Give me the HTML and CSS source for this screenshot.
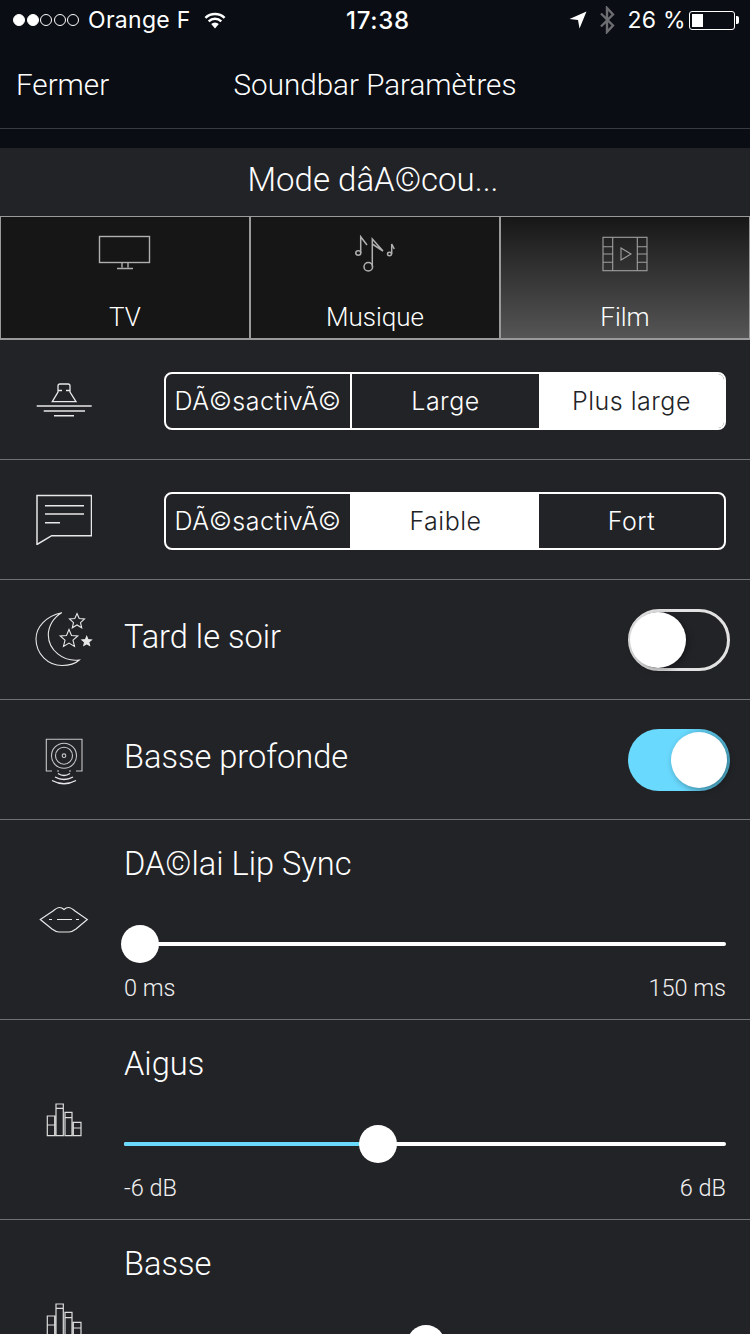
FILE: index.html
```html
<!DOCTYPE html>
<html lang="fr">
<head>
<meta charset="utf-8">
<title>Soundbar Paramètres</title>
<link rel="stylesheet" href="styles.css">
</head>
<body>
<div class="screen">
  <header class="top">
    <div class="status">
      <div class="status-left">
        <span class="signal"><i class="on"></i><i class="on"></i><i></i><i></i><i></i></span>
        <span class="carrier">Orange F</span>
        <svg class="wifi" width="24" height="18" viewBox="0 0 24 18"><path d="M12 17.500 8.200 13a5.500 5.500 0 0 1 7.600 0Z" fill="#fff"/><path d="M5.700 10.300a9.200 9.200 0 0 1 12.600 0M2.400 6.800a14 14 0 0 1 19.200 0" fill="none" stroke="#fff" stroke-width="2.500"/></svg>
      </div>
      <div class="clock">17:38</div>
      <div class="status-right">
        <svg class="arrow" width="18" height="18" viewBox="0 0 18 18"><path d="M0.500 8 17.500 0.500 10.500 17.500 9 9Z" fill="#fff"/></svg>
        <svg class="bt" width="16" height="28" viewBox="0 0 16 28"><path d="M2 7.500 14 19.500 8 26V2L14 8.500 2 20.500" fill="none" stroke="#6b6d70" stroke-width="2.400"/></svg>
        <span class="percent">26 %</span>
        <span class="battery"><span class="battery-level"></span></span><span class="battery-tip"></span>
      </div>
    </div>
    <nav class="nav">
      <span class="nav-close">Fermer</span>
      <span class="nav-title">Soundbar Paramètres</span>
    </nav>
    <div class="nav-gap"></div>
  </header>

  <h1 class="mode-title">Mode dâA©cou...</h1>

  <div class="tabs">
    <div class="tab">
      <svg class="tab-icon" width="54" height="37" viewBox="0 0 54 37" fill="none" stroke="#b0b0b0" stroke-width="1.400"><rect x="1.500" y="1.500" width="50" height="26"/><path d="M24 28v4.500M30 28v4.500M19 33.500h16"/></svg>
      <span class="tab-label">TV</span>
    </div>
    <div class="tab">
      <svg class="tab-icon" width="42" height="37" viewBox="0 0 42 37" fill="none" stroke="#b0b0b0" stroke-width="1.500"><path d="M6.700 18V1.700L13 10"/><ellipse cx="4.300" cy="18" rx="2.500" ry="2.200"/><path d="M18.300 31.700V4L29 16 18.300 9"/><circle cx="14.300" cy="31.700" r="4.300"/><path d="M37.700 19V9l2.600 5"/><ellipse cx="35.500" cy="19" rx="2" ry="1.700"/></svg>
      <span class="tab-label">Musique</span>
    </div>
    <div class="tab tab-active">
      <svg class="tab-icon" width="46" height="37" viewBox="0 0 46 37" fill="none" stroke="#a0a0a0" stroke-width="1.100"><rect x="1" y="2.300" width="44" height="33.400"/><path d="M10.700 2.300v33.400M35.300 2.300v33.400M1 11.700h9.700M1 19h9.700M1 27.300h9.700M35.300 11.700H45M35.300 19H45M35.300 27.300H45M19 13v12l10-6Z"/></svg>
      <span class="tab-label">Film</span>
    </div>
  </div>

  <section class="row">
    <div class="row-icon">
      <svg width="58" height="35" viewBox="0 0 58 35" fill="none" stroke="#e8e8e8" stroke-width="1.300"><path d="M17.300 19.700 23 10V4q0-2 2-2h8q2 0 2 2V10l6 9.700ZM23 8.500h4M31 8.500h4"/><path d="M1.700 24h55M8.700 29H50M19 33.700h20" stroke-width="1.500"/></svg>
    </div>
    <div class="segments">
      <span class="segment segment-first">DÃ©sactivÃ©</span>
      <span class="segment">Large</span>
      <span class="segment segment-on">Plus large</span>
    </div>
  </section>

  <section class="row">
    <div class="row-icon">
      <svg width="56" height="51" viewBox="0 0 56 51" fill="none" stroke="#e8e8e8" stroke-width="1.500"><path d="M1 1.500h54.500v40.200H15.700L1 50.500Z"/><path d="M9 11.700h39M9 20h39M9 28.700h15"/></svg>
    </div>
    <div class="segments">
      <span class="segment segment-first">DÃ©sactivÃ©</span>
      <span class="segment segment-on">Faible</span>
      <span class="segment">Fort</span>
    </div>
  </section>

  <section class="row">
    <div class="row-icon">
      <svg width="58" height="55" viewBox="0 0 58 55" fill="none" stroke="#e8e8e8" stroke-width="1.100"><path d="M26.700 .700C11 4 1 15 1 27 1 42 13 53.500 27 53.500 33 53.500 40 52 44.300 48 28 50 13.500 38 13.300 23 13.300 14 19 5 26.700 .700Z"/><path d="m42 1.500 2.200 5 5.300.5-4 3.600 1.200 5.200-4.700-2.800-4.700 2.800 1.200-5.200-4-3.600 5.300-.5ZM34 17.500l2.500 6 6.300.5-4.800 4.200 1.500 6.200-5.500-3.300-5.500 3.300 1.500-6.200-4.800-4.200 6.300-.5Z"/><path fill="#e8e8e8" d="m51.700 24.500 1.300 3.100 3.400.3-2.600 2.200.8 3.300-2.900-1.700-2.900 1.700.8-3.300-2.600-2.200 3.400-.3Z"/></svg>
    </div>
    <span class="row-label row-label-inline">Tard le soir</span>
    <span class="toggle"><span class="toggle-knob"></span></span>
  </section>

  <section class="row">
    <div class="row-icon">
      <svg width="38" height="51" viewBox="0 0 38 51" fill="none" stroke="#c8c8c8" stroke-width="1.100"><path d="M7 37H1.300V5.300H37V37H31M12 37h2M24 37h2"/><circle cx="19" cy="21.700" r="12.500"/><circle cx="19" cy="21.700" r="8.500"/><circle cx="19" cy="21.700" r="1.800"/><path stroke="#e8e8e8" stroke-width="1.400" d="M13 39.500q6 4 12 0M10 43q9 5 18 0M7 46.500q12 6.500 24 0"/></svg>
    </div>
    <span class="row-label row-label-inline">Basse profonde</span>
    <span class="toggle toggle-on"><span class="toggle-knob"></span></span>
  </section>

  <section class="row row-slider">
    <div class="row-icon">
      <svg width="50" height="27" viewBox="0 0 50 27" fill="none" stroke="#e8e8e8" stroke-width="1.200"><path d="M1.300 13.500 14 5Q18 1.500 20.500 1.500 23 1.500 25 3.500 27 1.500 29.500 1.500 32 1.500 36 5L48.300 13.500 37 23Q33 26 30 26H20Q17 26 13 23Z"/><path d="M10 13.500h3M18 13.500h15M37 13.500h3"/></svg>
    </div>
    <div class="slider-body">
      <span class="row-label">DA©lai Lip Sync</span>
      <div class="slider">
        <span class="track"></span>
        <span class="thumb thumb-start"></span>
      </div>
      <div class="slider-scale"><span>0 ms</span><span>150 ms</span></div>
    </div>
  </section>

  <section class="row row-slider">
    <div class="row-icon">
      <svg width="36" height="35" viewBox="0 0 36 35" fill="none" stroke="#dcdcdc" stroke-width="1.200"><path d="M1.300 14h7.400v19.700H1.300ZM1.300 23h7.400M10 2h7.300v31.700H10ZM10 6.300h7.300M19 10.300h7v23.400h-7ZM19 15.700h7M27.300 20.300H35v13.400h-7.700ZM27.300 26H35"/></svg>
    </div>
    <div class="slider-body">
      <span class="row-label">Aigus</span>
      <div class="slider">
        <span class="track"></span>
        <span class="track-fill"></span>
        <span class="thumb thumb-treble"></span>
      </div>
      <div class="slider-scale"><span>-6 dB</span><span>6 dB</span></div>
    </div>
  </section>

  <section class="row row-slider row-cut">
    <div class="row-icon">
      <svg width="36" height="35" viewBox="0 0 36 35" fill="none" stroke="#dcdcdc" stroke-width="1.200"><path d="M1.300 14h7.400v19.700H1.300ZM1.300 23h7.400M10 2h7.300v31.700H10ZM10 6.300h7.300M19 10.300h7v23.400h-7ZM19 15.700h7M27.300 20.300H35v13.400h-7.700ZM27.300 26H35"/></svg>
    </div>
    <div class="slider-body">
      <span class="row-label">Basse</span>
      <div class="slider">
        <span class="track"></span>
        <span class="thumb thumb-bass"></span>
      </div>
    </div>
  </section>
</div>
</body>
</html>
```

FILE: styles.css
```css
* { box-sizing: border-box; }

html, body {
  margin: 0;
  padding: 0;
  background: #222327;
}

.screen {
  width: 750px;
  height: 1334px;
  overflow: hidden;
  background: #222327;
  color: #fff;
  font-family: "Roboto", "Noto Sans", sans-serif;
  font-weight: 350;
}

/* Header */
.top { background: #0a0d14; }

.status {
  height: 40px;
  display: grid;
  grid-template-columns: 1fr auto 1fr;
  align-items: center;
  font-family: "Inter", sans-serif;
  font-size: 23px;
  font-weight: 400;
  letter-spacing: .3px;
}

.status-left {
  display: flex;
  align-items: center;
  padding-left: 13px;
}

.signal {
  display: flex;
  gap: 1.500px;
}

.signal i {
  width: 12px;
  height: 12px;
  border-radius: 50%;
  border: 1px solid #fff;
}

.signal i.on { background: #fff; }

.carrier { margin-left: 9px; }
.wifi { margin-left: 12px; }

.clock {
  font-size: 24px;
  font-weight: 500;
  letter-spacing: .7px;
  padding-left: 6px;
}

.status-right {
  display: flex;
  align-items: center;
  justify-content: flex-end;
  padding-right: 11px;
}

.bt { margin-left: 12px; }
.percent { margin-left: 12px; }

.battery {
  margin-left: 3px;
  width: 46px;
  height: 19px;
  border: 1px solid #fff;
  border-radius: 3px;
  padding: 2px;
  display: flex;
}

.battery-level {
  width: 11px;
  background: #fff;
}

.battery-tip {
  width: 3px;
  height: 8px;
  margin-left: 1px;
  background: #fff;
  border-radius: 0 2px 2px 0;
}

.nav {
  position: relative;
  height: 89px;
  padding-top: 2px;
  display: flex;
  align-items: center;
  justify-content: center;
  font-size: 29.600px;
  border-bottom: 1px solid #3a3b40;
}

.nav-close {
  position: absolute;
  left: 16px;
}

.nav-gap { height: 19px; }

.mode-title {
  margin: 0;
  height: 68px;
  display: flex;
  align-items: center;
  justify-content: center;
  font-size: 33px;
  font-weight: 350;
  padding: 0 4px 5px 0;
}

/* Source tabs */
.tabs {
  display: grid;
  grid-template-columns: repeat(3, 1fr);
  height: 124px;
  background: #161616;
  border: 1px solid #9a9a9a;
  border-width: 1px 0 2px;
}

.tab {
  display: flex;
  flex-direction: column;
  align-items: center;
  justify-content: space-between;
  padding: 18px 0 6px;
  border-left: 1px solid #9a9a9a;
  border-right: 1px solid #9a9a9a;
}

.tab-active {
  background: linear-gradient(#171717, #555);
}

.tab-label { font-size: 26px; }

.tab-icon { display: block; }

/* Setting rows */
.row {
  height: 120px;
  display: flex;
  align-items: center;
  padding-right: 24px;
  border-bottom: 1px solid #6f7073;
}

.row-icon {
  flex: 0 0 128px;
  display: flex;
  justify-content: center;
  align-self: center;
}

.row-icon svg { display: block; }

.row-label {
  display: block;
  font-size: 32.600px;
  line-height: 40px;
}

.row-label-inline {
  margin: 0 0 5px -4px;
}

.segments {
  margin: 3px 0 0 36px;
  flex: 1;
  height: 58px;
  display: grid;
  grid-template-columns: 186px 187px 1fr;
  border: 2px solid #fff;
  border-radius: 8px;
  overflow: hidden;
  font-family: "Inter", sans-serif;
  font-size: 25px;
  font-weight: 300;
  letter-spacing: .5px;
}

.segment {
  display: flex;
  align-items: center;
  justify-content: center;
  white-space: nowrap;
}

.segment-first { border-right: 2px solid #fff; }

.segment-on {
  background: #fff;
  color: #222327;
}

.toggle {
  margin-left: auto;
  margin-right: -4px;
  width: 102px;
  height: 62px;
  border-radius: 31px;
  border: 3px solid #e2e2e2;
  position: relative;
}

.toggle-knob {
  position: absolute;
  top: 0;
  left: -1px;
  width: 56px;
  height: 56px;
  border-radius: 50%;
  background: #fff;
  box-shadow: 2px 2px 6px rgba(0, 0, 0, .35);
}

.toggle-on {
  border: 0;
  background: linear-gradient(90deg, #69d9fd 55%, #52b6d6);
}

.toggle-on .toggle-knob {
  top: 3px;
  left: 43px;
}

/* Slider rows */
.row-slider {
  height: 200px;
  align-items: stretch;
}

.slider-body {
  flex: 1;
  display: flex;
  flex-direction: column;
  margin-left: -4px;
  padding-top: 24px;
}

.slider {
  position: relative;
  height: 38px;
  margin-top: 41px;
}

.track, .track-fill {
  position: absolute;
  left: 0;
  top: 17px;
  height: 4px;
  border-radius: 2px;
}

.track { right: 0; background: #fff; }
.track-fill { width: 240px; background: #69d9fd; }

.thumb {
  position: absolute;
  top: 0;
  width: 38px;
  height: 38px;
  border-radius: 50%;
  background: #fff;
}

.thumb-start { left: -3px; }
.thumb-treble { left: 235px; }
.thumb-bass { left: 283px; }

.slider-scale {
  display: flex;
  justify-content: space-between;
  margin-top: 10px;
  font-size: 23.500px;
  line-height: 30px;
  color: #f0f0f0;
}

.row-cut {
  border-bottom: 0;
  height: 114px;
}

.row-cut .row-icon {
  align-self: flex-start;
  padding-top: 82px;
}
```
